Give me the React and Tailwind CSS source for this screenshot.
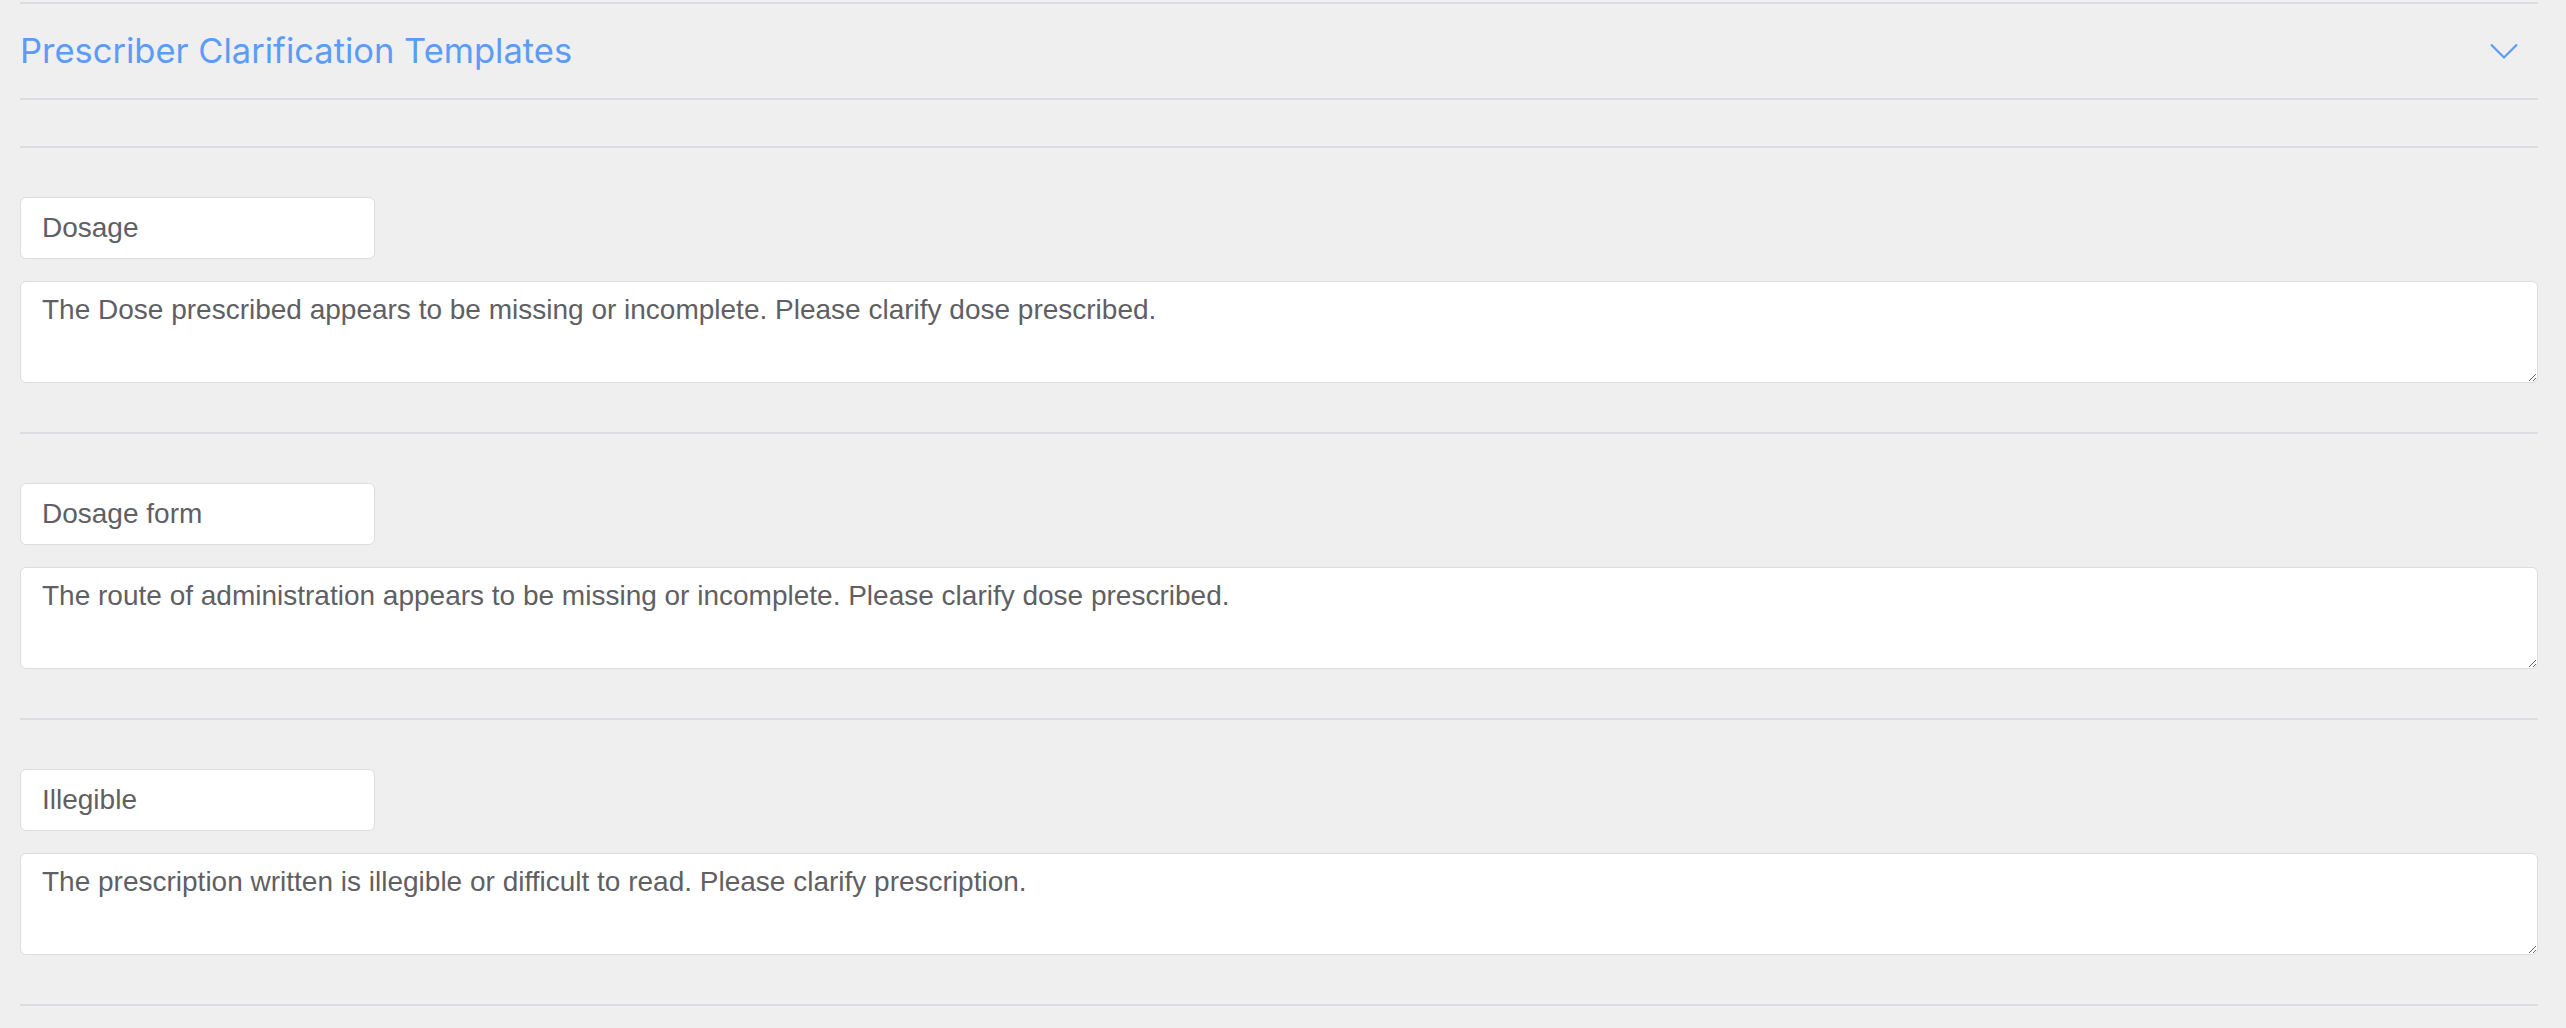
import { useState } from 'react'

const TEMPLATES = [
  {
    id: 'dosage',
    name: 'Dosage',
    text: 'The Dose prescribed appears to be missing or incomplete. Please clarify dose prescribed.',
  },
  {
    id: 'dosage-form',
    name: 'Dosage form',
    text: 'The route of administration appears to be missing or incomplete. Please clarify dose prescribed.',
  },
  {
    id: 'illegible',
    name: 'Illegible',
    text: 'The prescription written is illegible or difficult to read. Please clarify prescription.',
  },
]

function TemplateRow({ template, onChange }) {
  return (
    <div className="py-[49px] border-b-2 border-[#dddde1]">
      <input
        value={template.name}
        onChange={(e) => onChange(template.id, 'name', e.target.value)}
        className="block w-[355px] h-[62px] px-[21px] bg-white border border-[#dcdce1] rounded-md text-[28px] text-[#5f5f64] outline-none font-['Liberation_Sans',Arial,sans-serif]"
      />
      <textarea
        value={template.text}
        onChange={(e) => onChange(template.id, 'text', e.target.value)}
        className="block mt-[22px] w-full h-[102px] px-[21px] pt-[12px] bg-white border border-[#dcdce1] rounded-md text-[28px] leading-[1.15] text-[#5f5f64] outline-none font-['Liberation_Sans',Arial,sans-serif]"
      />
    </div>
  )
}

export default function App() {
  const [templates, setTemplates] = useState(TEMPLATES)
  const [open, setOpen] = useState(true)

  const handleChange = (id, field, value) => {
    setTemplates((prev) => prev.map((t) => (t.id === id ? { ...t, [field]: value } : t)))
  }

  return (
    <div className="min-h-screen bg-[#efefef] pl-5 pr-[28px] pt-[2px]">
      {/* Header */}
      <div className="border-t-2 border-b-2 border-[#dddde1]">
        <button
          onClick={() => setOpen(!open)}
          className="w-full h-[94px] flex items-center justify-between text-left"
        >
          <span className="text-[34.5px] text-[#5b9cf6] font-['Inter',sans-serif]">
            Prescriber Clarification Templates
          </span>
          <svg width="28" height="17" viewBox="0 0 28 17" className="mr-[20px]" fill="none">
            <polyline points="1,1.5 14,14.5 27,1.5" stroke="#5b9cf6" strokeWidth="2.2" />
          </svg>
        </button>
      </div>

      {open && (
        <div>
          <div className="h-[48px] border-b-2 border-[#dddde1]" />
          {templates.map((t) => (
            <TemplateRow key={t.id} template={t} onChange={handleChange} />
          ))}
        </div>
      )}
    </div>
  )
}
